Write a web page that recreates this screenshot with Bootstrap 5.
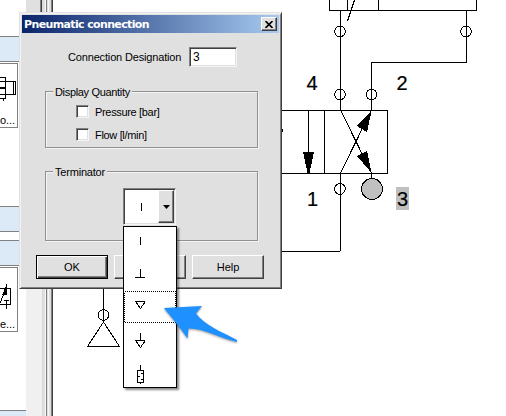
<!DOCTYPE html>
<html lang="en">
<head>
<meta charset="utf-8">
<title>Pneumatic connection</title>
<link href="https://cdn.jsdelivr.net/npm/bootstrap@5.3.0/dist/css/bootstrap.min.css" rel="stylesheet">
<script src="https://cdn.jsdelivr.net/npm/bootstrap@5.3.0/dist/js/bootstrap.bundle.min.js"></script>
<style>
body{width:506px;height:416px;font:11px/13px "Liberation Sans",Arial,sans-serif;color:#000;background:#fff}
.scene{width:506px;height:416px}
.canvas-art{left:0;top:0}
.dialog-win{left:19px;top:12px;width:263px;height:277px;background:#e0e0e0;border:1px solid;border-color:#e0e0e0 #404040 #404040 #e0e0e0;box-shadow:inset 1px 1px #f4f4f4,inset -1px -1px #808080;padding:2px}
.title-strip{height:18px;background:linear-gradient(90deg,#0a246a,#a6caf0);color:#fff;font:bold 11px/19px "DejaVu Sans",sans-serif;padding:0 2px}
.title-text{letter-spacing:-.63px;white-space:nowrap}
.raised{background:#e0e0e0;border:1px solid;border-color:#fff #404040 #404040 #fff;box-shadow:inset -1px -1px #808080;border-radius:0;color:#000;padding:0;font-size:11px;line-height:13px}
.close-box{width:16px;height:14px}
.sunken{background:#fff;border:1px solid;border-color:#808080 #f4f4f4 #f4f4f4 #808080;box-shadow:inset 1px 1px #404040,inset -1px -1px #e0e0e0}
.designation-row{height:46px;padding:14px 42px 0 46px}
.designation-label{letter-spacing:-.16px}
.entry{width:48px;height:20px;padding:3px 0 0 3px;font-size:12px}
.group-box{width:213px;margin-left:23px;border:1px solid #909090;box-shadow:1px 1px #f4f4f4,inset 1px 1px #f4f4f4}
.quantity-box{margin-top:12px;height:57px;padding:13px 0 0 30px;letter-spacing:-.33px}
.terminator-box{margin-top:23px;height:70px;padding:16px 0 0 77px}
.terminator-box .group-title{letter-spacing:-.2px}
.group-title{left:7px;top:-7px;height:14px;background:#e0e0e0;padding:0 2px;white-space:nowrap;line-height:14px}
.tick-row{gap:6px;height:23px;line-height:15px}
.tick{width:13px;height:13px}
.combo{width:53px;height:37px;padding:1px}
.combo-btn{width:16px}
.button-row{padding:14px 0 0 14px;gap:6px}
.push{width:72px;height:24px}
.push-default{outline:1px solid #000;outline-offset:-1px;border-color:#000;box-shadow:inset 1px 1px #fff,inset -1px -1px #404040,inset -2px -2px #808080}
.drop-list{left:123px;top:226px;width:54px;height:162px;background:#fff;border:1px solid #000;box-shadow:2px 2px 2px #0007}
.drop-item{height:32px;width:52px}
.arrow-mark{left:155px;top:295px}
</style>
</head>
<body class="m-0 overflow-hidden">
<div class="scene position-relative overflow-hidden">
<svg class="canvas-art position-absolute" width="506" height="416" shape-rendering="crispEdges">
 <rect x="26" width="20" height="416" fill="#f0f0f0"/><rect x="26" width="14" height="13" fill="#e0e0e0"/><rect x="42" width="10" height="416" fill="#e0e0e0"/>
 <path d="M42.500 0V416" stroke="#d8d8d8"/><path d="M46.500 0V416M51.500 0V416" stroke="#808080"/><path d="M52.500 0V416M41.500 0V13" stroke="#404040"/><path d="M40.500 0V13" stroke="#808080"/><path d="M48.500 0V416M45.500 0V416" stroke="#f8f8f8"/>
 <g fill="#dce9f7"><rect y="37" width="20" height="24"/><rect y="207" width="20" height="24"/><rect y="241" width="20" height="24"/><rect y="411" width="26" height="5"/></g>
 <g fill="none" stroke="#808080"><path d="M0 36.500H20M0 61.500H20M0 206.500H20M0 231.500H20M0 240.500H20M0 265.500H20M0 410.500H26"/><path d="M0 63.500H17.500V127.500H0M0 267.500H17.500V331.500H0"/></g>
 <g fill="none" stroke="#000"><path d="M0 77.500H5.500V98.500M0 81.500H15.500V94.500H0M13.500 81V95M0 88.500H5M0 98.500H5M3.500 98V101M0 87.500H5"/><path d="M0 288.500H10.500V304.500H0M6.500 284V292M6.500 300V309M4 300.500H9"/><path d="M0 303L6 289M3 294L6 287V294Z" fill="#000"/></g>
 <g fill="none" stroke="#000"><path d="M329.500 0V10.500H476.500V0M347.500 0V10M378.500 0V10M354.500 0L347.500 21"/><path d="M340.500 10V110M466.500 10V62.500H371.500V110M282 110.500H387.500V173.500H282M308.500 110V160M324.500 110V173M340.500 110L371.500 173M340.500 173L371.500 110M371.500 173V179M340.500 173V250.500M282 251.500H340"/><circle cx="340" cy="31.500" r="5.300"/><circle cx="466" cy="31.500" r="5.300"/><circle cx="340" cy="94.500" r="5.300"/><circle cx="371.500" cy="94.500" r="5.300"/><circle cx="340" cy="189" r="5.300"/><circle cx="372" cy="189" r="10.500" fill="#c0c0c0"/><path d="M103.500 288V322L87.500 346.500H119.500L103.500 322"/><circle cx="103.500" cy="315" r="5.300"/></g>
 <path d="M303 152H314L309.500 173H307.500ZM371.500 111L357 126L367 132ZM371.500 173L357 156L367 151ZM282 129H283V132H282Z"/>
 <rect x="396" y="187" width="13" height="23" fill="#c0c0c0"/>
 <g font-family="Liberation Sans,Arial,sans-serif" font-size="20" stroke="#000" stroke-width=".2"><text x="306.500" y="90">4</text><text x="396.500" y="90">2</text><text x="307" y="206">1</text><text x="397" y="206">3</text></g>
 <g font-family="Liberation Sans,Arial,sans-serif" font-size="11"><text x="0" y="124" textLength="15">o...</text><text x="0" y="328" textLength="15">e...</text></g>
</svg>

<div class="dialog-win position-absolute">
 <div class="title-strip d-flex align-items-center justify-content-between"><span class="title-text">Pneumatic connection</span>
  <button class="raised close-box d-flex align-items-center justify-content-center" aria-label="Close"><svg width="8" height="7"><path d="M.5 0L7.500 7M7.500 0L.5 7" stroke="#000" stroke-width="1.600"/></svg></button></div>
 <div class="designation-row d-flex justify-content-between"><span class="pt-1 text-nowrap designation-label">Connection Designation</span><div class="sunken entry">3</div></div>
 <div class="group-box quantity-box position-relative"><span class="group-title position-absolute">Display Quantity</span>
  <div class="tick-row d-flex"><span class="sunken tick"></span><span>Pressure [bar]</span></div>
  <div class="tick-row d-flex"><span class="sunken tick"></span><span>Flow [l/min]</span></div></div>
 <div class="group-box terminator-box position-relative"><span class="group-title position-absolute">Terminator</span>
  <div class="sunken combo d-flex"><div class="flex-grow-1 d-flex align-items-center justify-content-center"><svg width="3" height="8" shape-rendering="crispEdges"><path d="M1.500 0V8" stroke="#000"/></svg></div><div class="raised combo-btn d-flex align-items-center justify-content-center"><svg width="7" height="4"><path d="M0 0H7L3.500 4Z"/></svg></div></div></div>
 <div class="button-row d-flex"><button class="raised push push-default">OK</button><button class="raised push" aria-label="Cancel"></button><button class="raised push">Help</button></div>
</div>

<div class="drop-list position-absolute">
 <svg class="d-block drop-item" fill="none" stroke="#000" shape-rendering="crispEdges"><path d="M16.500 10V18"/></svg>
 <svg class="d-block drop-item" fill="none" stroke="#000" shape-rendering="crispEdges"><path d="M16.500 10V18M11 18.500H21"/></svg>
 <svg class="d-block drop-item" fill="none" stroke="#000" shape-rendering="crispEdges"><path d="M.5 .5H51.500V31.500H.5Z" stroke-dasharray="1 1"/><path d="M11 10.500H21M12 11L16.500 17.500L21 11"/></svg>
 <svg class="d-block drop-item" fill="none" stroke="#000" shape-rendering="crispEdges"><path d="M16.500 10V17M11 17.500H21M12 18L16.500 24.500L21 18"/></svg>
 <svg class="d-block drop-item" fill="none" stroke="#000" shape-rendering="crispEdges"><path d="M16.500 10V15M13.500 15.500H19.500V27.500H13.500ZM16.500 27V29M17 18.500H19M14 21.500H16M17 24.500H19"/></svg>
</div>
<svg class="arrow-mark position-absolute" width="90" height="54"><path d="M9 13L47 11L41 18.500C49 30 67 37 82 45V47C64 43 48 33 33.500 33.500L32.500 43.500C24 31 16 22 9 13Z" fill="#1e90ff" style="filter:drop-shadow(0 1px 1px #0006)"/></svg>
</div>
</body>
</html>
